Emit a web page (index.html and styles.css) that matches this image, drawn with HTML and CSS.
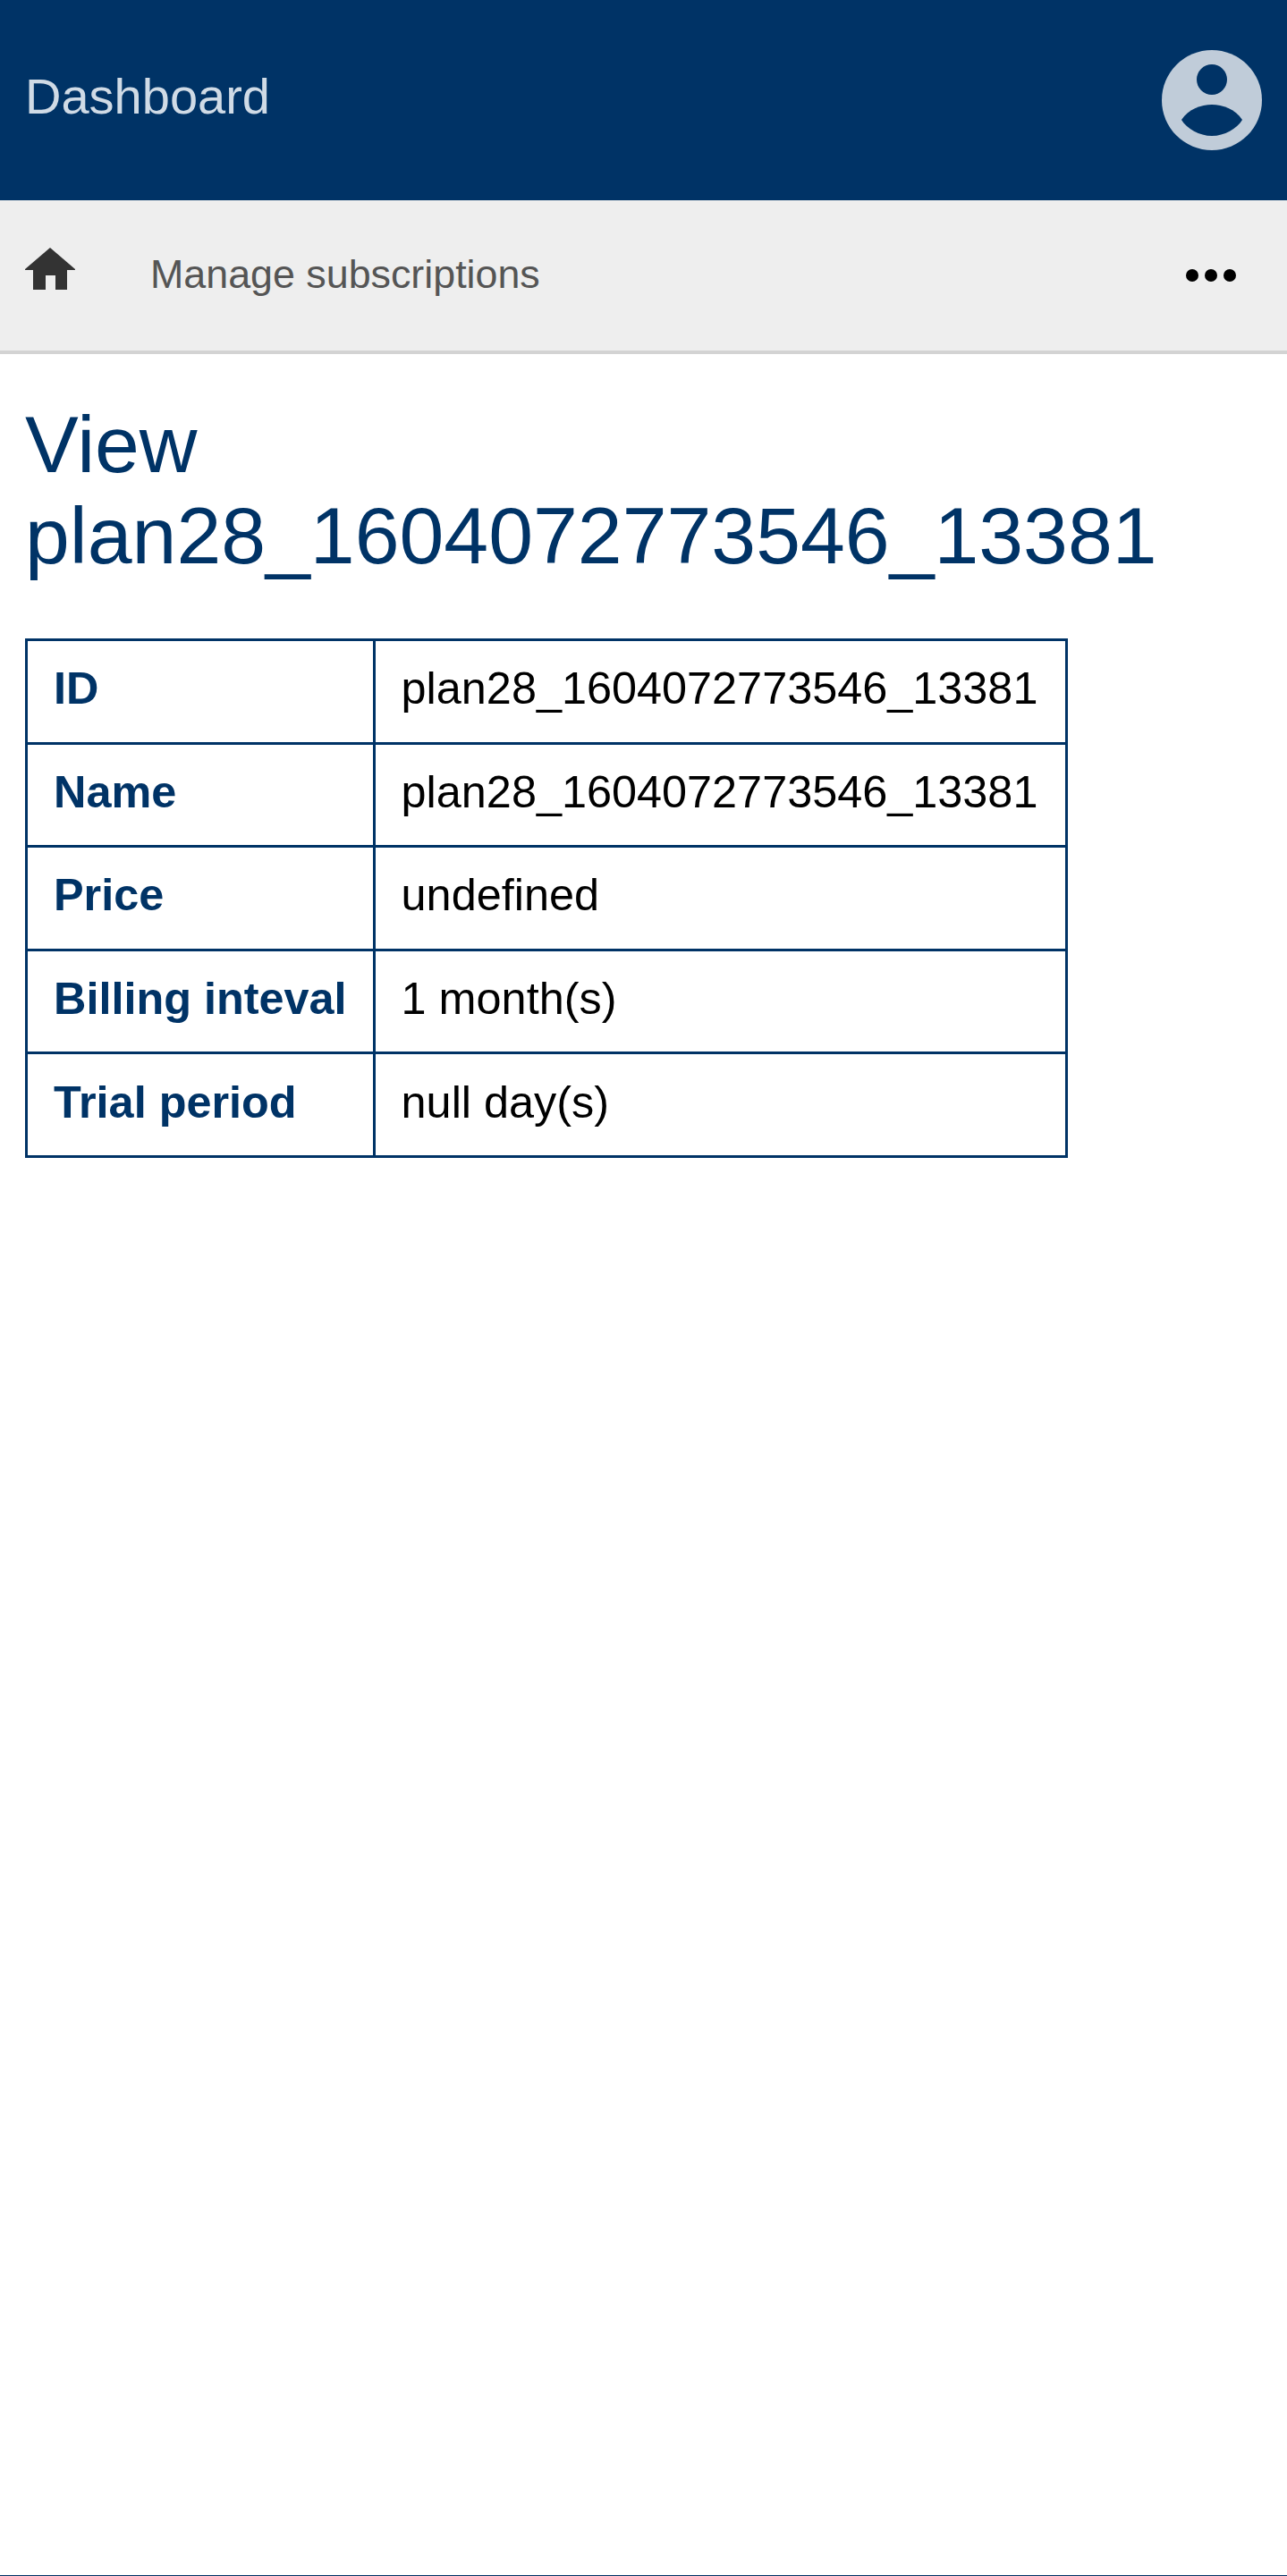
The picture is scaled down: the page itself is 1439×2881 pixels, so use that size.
FILE: index.html
```html
<!DOCTYPE html>
<html lang="en">
<head>
  <meta charset="UTF-8">
  <title>View plan</title>
  <link rel="stylesheet" href="styles.css">
</head>
<body>
  <header class="header">
    <a class="brand">Dashboard</a>
    <svg class="avatar" viewBox="0 0 112 112">
      <circle cx="56" cy="56" r="56" fill="#c0ccd9"/>
      <circle cx="56" cy="33" r="17" fill="#003366"/>
      <path d="M22 78C30 66 44 61 56 61C68 61 82 66 90 78C84 88 70 96 56 96C42 96 28 88 22 78Z" fill="#003366"/>
    </svg>
  </header>

  <nav class="nav">
    <svg class="home" viewBox="0 0 56 47">
      <path d="M28 0L56 24V25H47V47H34V31H23V47H9V25H0V24Z" fill="#333"/>
    </svg>
    <span class="crumb">Manage subscriptions</span>
    <div class="more">
      <span></span><span></span><span></span>
    </div>
  </nav>

  <main class="content">
    <h1>View plan28_1604072773546_13381</h1>
    <table class="details">
      <tr><th>ID</th><td>plan28_1604072773546_13381</td></tr>
      <tr><th>Name</th><td>plan28_1604072773546_13381</td></tr>
      <tr><th>Price</th><td>undefined</td></tr>
      <tr><th>Billing inteval</th><td>1 month(s)</td></tr>
      <tr><th>Trial period</th><td>null day(s)</td></tr>
    </table>
  </main>

  <footer class="footer"></footer>
</body>
</html>
```

FILE: styles.css
```css
html, body {
  margin: 0;
  height: 100%;
}

body {
  display: flex;
  flex-direction: column;
  font-family: "Liberation Sans", Arial, sans-serif;
  background-color: #fff;
}

.header {
  display: flex;
  align-items: center;
  justify-content: space-between;
  height: 224px;
  padding: 0 28.5px 0 28px;
  background-color: #003366;
}

.brand {
  margin-bottom: 10px;
  font-size: 56px;
  color: #d0dbe6;
}

.avatar {
  width: 112px;
  height: 112px;
}

.nav {
  display: flex;
  align-items: center;
  height: 168px;
  padding: 0 57px 0 28px;
  background-color: #eee;
  border-bottom: 4px solid #d3d3d3;
}

.home {
  width: 56px;
  height: 47px;
  margin-right: 84px;
  margin-bottom: 15px;
}

.crumb {
  flex: 1;
  margin-bottom: 3px;
  font-size: 44.8px;
  color: #555;
}

.more {
  display: flex;
  gap: 7px;
}

.more span {
  width: 14px;
  height: 14px;
  border-radius: 50%;
  background-color: #000;
}

.content {
  flex: 1;
  padding: 0 28px;
}

h1 {
  margin: 50px 0 64px;
  font-size: 89.6px;
  font-weight: normal;
  line-height: 102px;
  color: #003366;
}

.details {
  border-collapse: collapse;
  font-size: 50.4px;
}

.details th, .details td {
  height: 105.6px;
  padding: 0 29px 7px;
  border: 3px solid #003366;
  text-align: left;
}

.details th {
  color: #003366;
}

.details td {
  padding-right: 30.5px;
  color: #000;
}

.footer {
  height: 1px;
  background-color: #003366;
}
```
